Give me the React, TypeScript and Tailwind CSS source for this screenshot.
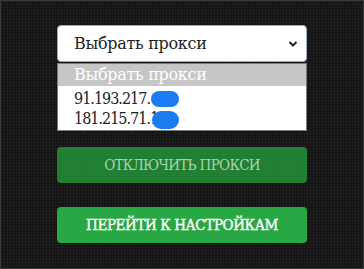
import React from 'react';

const slab = { fontFamily: '"DejaVu Serif", "Liberation Serif", serif' };

const Blob: React.FC<{ className?: string }> = ({ className }) => (
  <span className={`inline-block align-middle bg-[#1a7cf0] rounded-full ${className ?? ''}`} />
);

export default function App() {
  return (
    <div
      className="w-[364px] h-[269px] border border-[#3a3a3a] bg-[#121212] bg-[linear-gradient(#1e1e1e_1px,transparent_1px),linear-gradient(90deg,#1e1e1e_1px,transparent_1px)] bg-[size:3px_3px] flex flex-col items-center pt-[24px]"
      style={slab}
    >
      <div className="w-[250px]">
        <div className="h-[37px] bg-white rounded-[4px] border border-[#9aa7c9] flex items-center justify-between pl-[16px] pr-[8px] text-[#222] text-[16px] tracking-[-0.3px]">
          <span>Выбрать прокси</span>
          <svg width="10" height="8" viewBox="0 0 10 8" fill="none">
            <path d="M1.5 2 L5 5.5 L8.5 2" stroke="#222" strokeWidth="2" />
          </svg>
        </div>
        <div className="mt-[1px] bg-white border border-[#7a7a7a] text-[16px] tracking-[-0.3px] leading-[20px] text-[#222]">
          <div className="bg-[#c6c6c6] text-white h-[22px] flex items-center pl-[16px]">Выбрать прокси</div>
          <div className="pl-[16px] pt-[3px] flex items-center h-[22px] font-stretch-condensed tracking-[-1px]">
            <span>91.193.217.</span>
            <Blob className="w-[28px] h-[16px] ml-[1px]" />
          </div>
          <div className="pl-[16px] flex items-center h-[22px] font-stretch-condensed tracking-[-1px]">
            <span>181.215.71.1</span>
            <Blob className="w-[27px] h-[18px] -ml-[6px] mt-[1px]" />
          </div>
        </div>
        <button className="mt-[16px] w-full h-[36px] rounded-[4px] bg-[#239a3b]/80 text-[#a9d6ab] text-[15px] font-stretch-condensed tracking-[-0.7px]">
          ОТКЛЮЧИТЬ ПРОКСИ
        </button>
        <button className="mt-[24px] w-full h-[36px] rounded-[4px] bg-[#28a745] text-white text-[15px] font-stretch-condensed tracking-[-0.4px] [-webkit-text-stroke:0.4px_white]">
          ПЕРЕЙТИ К НАСТРОЙКАМ
        </button>
      </div>
    </div>
  );
}
